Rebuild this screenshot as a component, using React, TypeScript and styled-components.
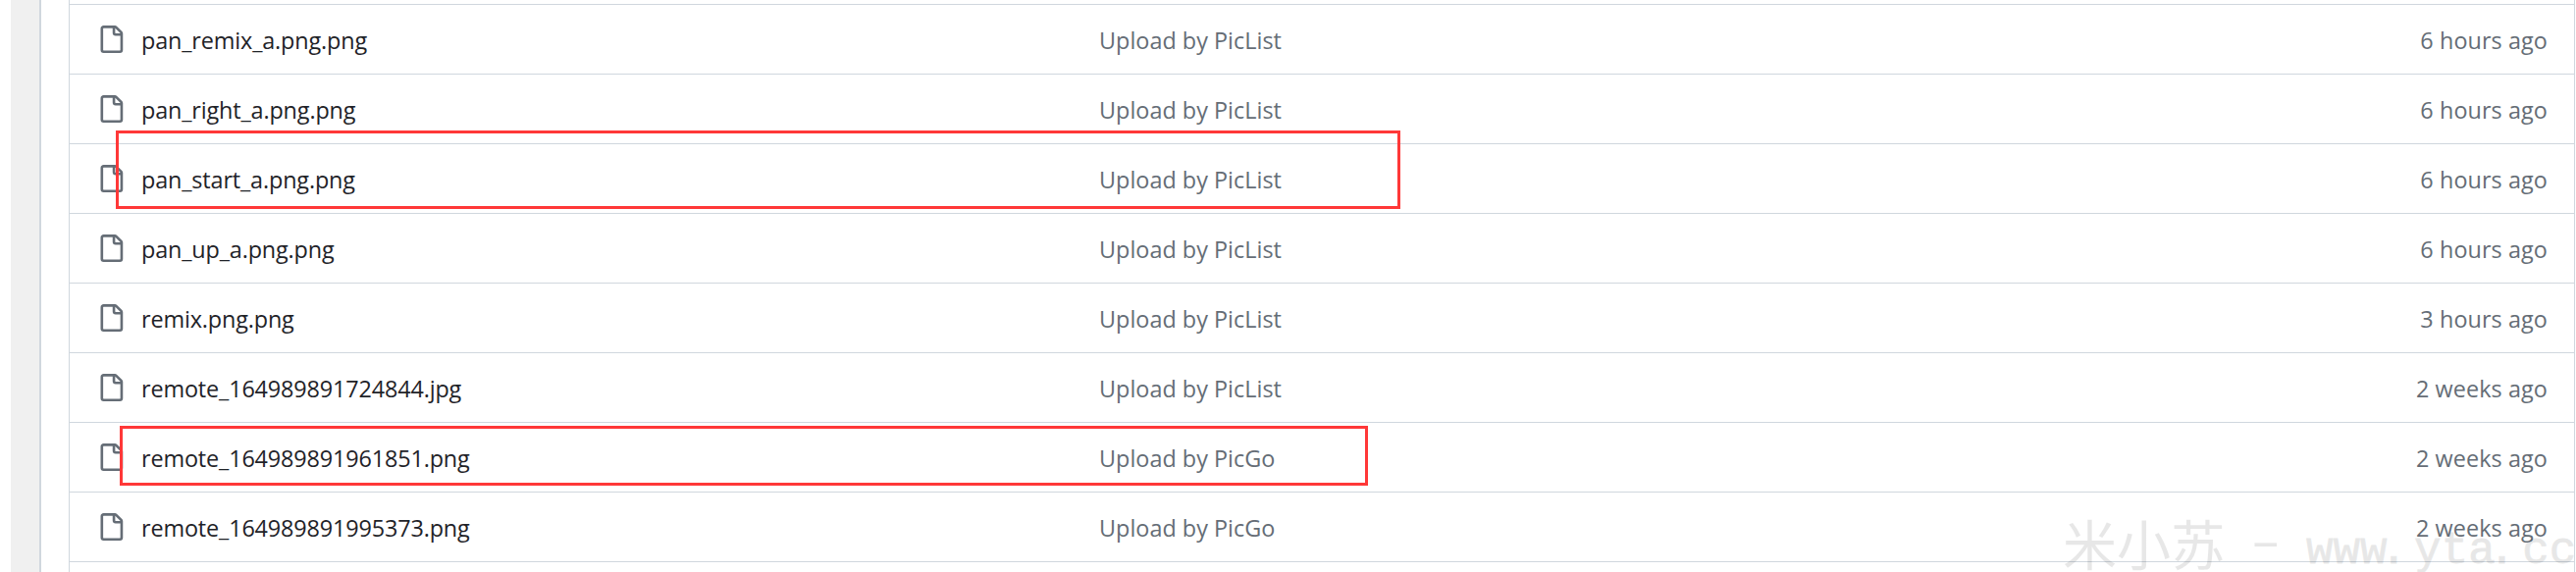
import React from 'react';
import styled, { createGlobalStyle } from 'styled-components';

const GlobalStyle = createGlobalStyle`
  * { box-sizing: border-box; }
  html, body { margin: 0; background: #fff; }
  body { overflow: hidden; }
`;

const Page = styled.div`
  position: relative;
  display: flex;
  width: 2625px;
  height: 583px;
  padding-left: 11px;
  overflow: hidden;
  background: #fff;
  font-family: 'Open Sans', 'Noto Sans', sans-serif;
`;

const Gutter = styled.div`
  width: 31px;
  flex: none;
  background: #f0f0f0;
  border-right: 2px solid #d0d7de;
`;

const FileTable = styled.div`
  width: 2554px;
  height: 583px;
  flex: none;
  margin-left: 28px;
  padding-top: 4px;
  border-left: 1px solid #d0d7de;
  border-right: 1px solid #d0d7de;
`;

const Row = styled.div`
  display: flex;
  align-items: center;
  height: 71px;
  padding: 0 27px 0 28px;
  border-top: 1px solid #d0d7de;
  font-size: 23.4px;
  line-height: 36px;
  white-space: nowrap;
`;

const FileIcon = styled.svg`
  width: 28px;
  height: 28px;
  flex: none;
  fill: #656d76;
`;

const Cell = styled.span`
  padding-top: 2px;
  color: #656d76;
`;

const FileName = styled(Cell)`
  width: 976px;
  flex: none;
  margin-left: 17px;
  color: #1f2328;
  letter-spacing: -0.14px;
`;

const Message = styled(Cell)`
  flex: 1;
  letter-spacing: 0.02px;
`;

const Age = styled(Cell)`
  letter-spacing: 0.08px;
`;

const Highlight = styled.div<{ $x: number; $y: number; $w: number; $h: number }>`
  position: absolute;
  left: ${(p) => p.$x}px;
  top: ${(p) => p.$y}px;
  width: ${(p) => p.$w}px;
  height: ${(p) => p.$h}px;
  border: 3px solid #ff3838;
`;

const Watermark = styled.div`
  position: absolute;
  left: 2102px;
  top: 517px;
  display: flex;
  align-items: baseline;
  line-height: 70px;
  white-space: pre;
  color: #000;
  opacity: 0.092;
  font-family: 'Liberation Mono', monospace;
  font-size: 45.9px;
  -webkit-text-stroke: 0.8px #000;
`;

const WatermarkName = styled.span`
  font-family: 'Noto Sans CJK SC', sans-serif;
  font-size: 55.1px;
  -webkit-text-stroke: 0;
`;

const WatermarkSite = styled.span`
  transform: translateY(-2px);
`;

const Dash = styled.span`
  display: inline-block;
  transform: translateY(-6px) scaleX(1.8);
  -webkit-text-stroke: 0;
`;

const Dot = styled.span`
  display: inline-block;
  transform: translateX(-7px);
`;

const files = [
  { name: 'pan_remix_a.png.png', message: 'Upload by PicList', age: '6 hours ago' },
  { name: 'pan_right_a.png.png', message: 'Upload by PicList', age: '6 hours ago' },
  { name: 'pan_start_a.png.png', message: 'Upload by PicList', age: '6 hours ago' },
  { name: 'pan_up_a.png.png', message: 'Upload by PicList', age: '6 hours ago' },
  { name: 'remix.png.png', message: 'Upload by PicList', age: '3 hours ago' },
  { name: 'remote_164989891724844.jpg', message: 'Upload by PicList', age: '2 weeks ago' },
  { name: 'remote_164989891961851.png', message: 'Upload by PicGo', age: '2 weeks ago' },
  { name: 'remote_164989891995373.png', message: 'Upload by PicGo', age: '2 weeks ago' },
];

export default function App() {
  return (
    <Page>
      <GlobalStyle />
      <Gutter />
      <FileTable>
        {files.map((file) => (
          <Row key={file.name}>
            <FileIcon viewBox="0 0 16 16" aria-hidden="true">
              <path d="M2 1.75C2 .784 2.784 0 3.75 0h6.586c.464 0 .909.184 1.237.513l2.914 2.914c.329.328.513.773.513 1.237v9.586A1.75 1.75 0 0 1 13.25 16h-9.5A1.75 1.75 0 0 1 2 14.25Zm1.75-.25a.25.25 0 0 0-.25.25v12.5c0 .138.112.25.25.25h9.5a.25.25 0 0 0 .25-.25V6h-2.75A1.75 1.75 0 0 1 9 4.25V1.5Zm6.75.062V4.25c0 .138.112.25.25.25h2.688l-.011-.013-2.914-2.914-.013-.011Z" />
            </FileIcon>
            <FileName>{file.name}</FileName>
            <Message>{file.message}</Message>
            <Age>{file.age}</Age>
          </Row>
        ))}
        <Row />
      </FileTable>
      <Highlight $x={118} $y={133} $w={1309} $h={80} />
      <Highlight $x={122} $y={434} $w={1272} $h={61} />
      <Watermark>
        <WatermarkName>米小苏</WatermarkName>
        <WatermarkSite>
          {' '}
          <Dash>-</Dash>
          {' www'}
          <Dot>.</Dot>
          yta
          <Dot>.</Dot>
          cc
        </WatermarkSite>
      </Watermark>
    </Page>
  );
}
